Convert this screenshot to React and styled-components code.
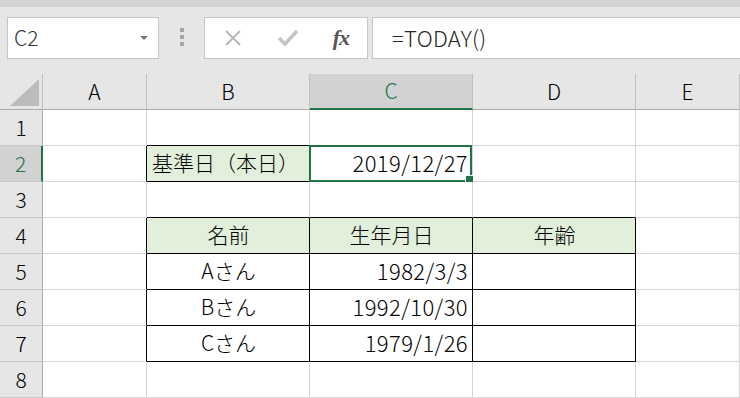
import React from "react";
import styled, { createGlobalStyle } from "styled-components";

const GREEN = "#217346";

const GlobalStyle = createGlobalStyle`
  body {
    margin: 0;
    background: #fff;
    font-family: "Noto Sans CJK JP", "Noto Sans", sans-serif;
  }
`;

const Window = styled.div`
  width: 740px;
  height: 398px;
  overflow: hidden;
  background: #fff;
`;

const TopStrip = styled.div`
  height: 7px;
  background: #d4d4d4;
`;

const Toolbar = styled.div`
  display: flex;
  align-items: flex-start;
  height: 67px;
  box-sizing: border-box;
  padding: 10px 0 0 7px;
  background: #e6e6e6;
`;

const NameBox = styled.div`
  display: flex;
  align-items: center;
  justify-content: space-between;
  width: 152px;
  height: 42px;
  box-sizing: border-box;
  padding: 0 10px 2px 6px;
  border: 1px solid #c6c6c6;
  background: #fff;
  color: #333;
  font-size: 21px;
  font-weight: 300;
`;

const Arrow = styled.span`
  width: 0;
  height: 0;
  margin-top: 2px;
  border-left: 4px solid transparent;
  border-right: 4px solid transparent;
  border-top: 4px solid #777;
`;

const Grip = styled.div`
  display: flex;
  flex-direction: column;
  align-items: center;
  gap: 3px;
  width: 45px;
  padding-top: 11px;
`;

const Dot = styled.span`
  width: 4px;
  height: 4px;
  background: #a6a6a6;
`;

const ButtonBox = styled.div`
  display: flex;
  align-items: center;
  justify-content: space-between;
  width: 164px;
  height: 42px;
  box-sizing: border-box;
  padding: 0 18px 0 18px;
  border: 1px solid #c6c6c6;
  background: #fff;
`;

const Fx = styled.span`
  font-family: "Liberation Serif", "DejaVu Serif", serif;
  font-style: italic;
  font-weight: bold;
  font-size: 22px;
  color: #555;
  letter-spacing: -1px;
`;

const FormulaInput = styled.div`
  flex: 1;
  display: flex;
  align-items: center;
  height: 42px;
  margin-left: 4px;
  box-sizing: border-box;
  padding: 0 0 3px 19px;
  border: 1px solid #c6c6c6;
  border-right: none;
  background: #fff;
  color: #262626;
  font-size: 22px;
  font-weight: 300;
  letter-spacing: 0.3px;
`;

const Sheet = styled.div`
  display: grid;
  grid-template-columns: 43px 104px 163px 163px 163px 1fr;
  grid-auto-rows: 36px;
`;

const Corner = styled.div`
  display: flex;
  justify-content: flex-end;
  align-items: flex-end;
  box-sizing: border-box;
  padding: 0 3px 3px 0;
  background: #e6e6e6;
  border-right: 1px solid #c0c0c0;
  border-bottom: 1px solid #ababab;
`;

const ColHeader = styled.div`
  display: flex;
  align-items: center;
  justify-content: center;
  box-sizing: border-box;
  padding-bottom: 2px;
  background: ${(p) => (p.$selected ? "#d2d2d2" : "#e6e6e6")};
  color: ${(p) => (p.$selected ? GREEN : "#000")};
  border-right: 1px solid #c0c0c0;
  border-bottom: ${(p) => (p.$selected ? `2px solid ${GREEN}` : "1px solid #ababab")};
  font-size: 21px;
  font-weight: 300;
`;

const RowHeader = styled.div`
  display: flex;
  align-items: center;
  justify-content: center;
  box-sizing: border-box;
  padding-bottom: 2px;
  background: ${(p) => (p.$selected ? "#d2d2d2" : "#e6e6e6")};
  color: ${(p) => (p.$selected ? GREEN : "#000")};
  border-right: ${(p) => (p.$selected ? `2px solid ${GREEN}` : "1px solid #ababab")};
  border-bottom: 1px solid #c8c8c8;
  font-size: 21px;
  font-weight: 300;
`;

const Cell = styled.div`
  position: relative;
  display: flex;
  align-items: center;
  justify-content: ${(p) =>
    p.$align === "right" ? "flex-end" : p.$align === "center" ? "center" : "flex-start"};
  box-sizing: border-box;
  padding: 0 4px 3px 5px;
  background: ${(p) => (p.$fill ? "#e2efda" : "#fff")};
  border-right: 1px solid ${(p) => (p.$right ? "#000" : "#d4d4d4")};
  border-bottom: 1px solid ${(p) => (p.$bottom ? "#000" : "#d4d4d4")};
  color: #000;
  font-size: ${(p) => (p.$num ? "22px" : "21px")};
  font-weight: 300;
  letter-spacing: ${(p) => (p.$num ? "0.4px" : "0")};
  white-space: nowrap;
`;

const Selection = styled.div`
  position: absolute;
  top: -1px;
  left: -1px;
  right: 0;
  bottom: -1px;
  border: 2px solid ${GREEN};
  pointer-events: none;
`;

const FillHandle = styled.div`
  position: absolute;
  right: -4px;
  bottom: -4px;
  width: 7px;
  height: 7px;
  background: ${GREEN};
  border: 1px solid #fff;
`;

const COLS = ["A", "B", "C", "D", "E"];
const ROWS = 8;

// cells by "col+row"; b = black border, f = green fill
const DATA = {
  B2: { text: "基準日（本日）", align: "left", f: true, b: true },
  C2: { text: "2019/12/27", align: "right" },
  B4: { text: "名前", align: "center", f: true, b: true },
  C4: { text: "生年月日", align: "center", f: true, b: true },
  D4: { text: "年齢", align: "center", f: true, b: true },
  B5: { text: "Aさん", align: "center", b: true },
  C5: { text: "1982/3/3", align: "right", b: true },
  D5: { b: true },
  B6: { text: "Bさん", align: "center", b: true },
  C6: { text: "1992/10/30", align: "right", b: true },
  D6: { b: true },
  B7: { text: "Cさん", align: "center", b: true },
  C7: { text: "1979/1/26", align: "right", b: true },
  D7: { b: true },
};

const ACTIVE = "C2";

const bordered = (c, r) => {
  const d = DATA[`${COLS[c]}${r}`];
  return !!(d && d.b);
};

const XIcon = () => (
  <svg width="20" height="20" viewBox="0 0 20 20">
    <path d="M3 3L17 17M17 3L3 17" stroke="#b8b8b8" strokeWidth="2" fill="none" />
  </svg>
);

const CheckIcon = () => (
  <svg width="22" height="20" viewBox="0 0 22 20">
    <path d="M2 10L8 16L20 3" stroke="#c4c4c4" strokeWidth="3.5" fill="none" />
  </svg>
);

const CornerTriangle = () => (
  <svg width="29" height="27" viewBox="0 0 29 27">
    <polygon points="0,27 29,27 29,0" fill="#bcbcbc" />
  </svg>
);

export default function App() {
  const rows = [];
  for (let r = 1; r <= ROWS; r++) {
    rows.push(
      <RowHeader key={`h${r}`} $selected={r === 2}>
        {r}
      </RowHeader>
    );
    COLS.forEach((col, c) => {
      const id = `${col}${r}`;
      const d = DATA[id] || {};
      rows.push(
        <Cell
          key={id}
          $align={d.align}
          $fill={d.f}
          $num={d.align === "right"}
          $right={bordered(c, r) || bordered(c + 1, r)}
          $bottom={bordered(c, r) || bordered(c, r + 1)}
        >
          {d.text}
          {id === ACTIVE && (
            <Selection>
              <FillHandle />
            </Selection>
          )}
        </Cell>
      );
    });
  }

  return (
    <Window>
      <GlobalStyle />
      <TopStrip />
      <Toolbar>
        <NameBox>
          C2
          <Arrow />
        </NameBox>
        <Grip>
          <Dot />
          <Dot />
          <Dot />
        </Grip>
        <ButtonBox>
          <XIcon />
          <CheckIcon />
          <Fx>fx</Fx>
        </ButtonBox>
        <FormulaInput>=TODAY()</FormulaInput>
      </Toolbar>
      <Sheet>
        <Corner>
          <CornerTriangle />
        </Corner>
        {COLS.map((col) => (
          <ColHeader key={col} $selected={col === "C"}>
            {col}
          </ColHeader>
        ))}
        {rows}
      </Sheet>
    </Window>
  );
}
